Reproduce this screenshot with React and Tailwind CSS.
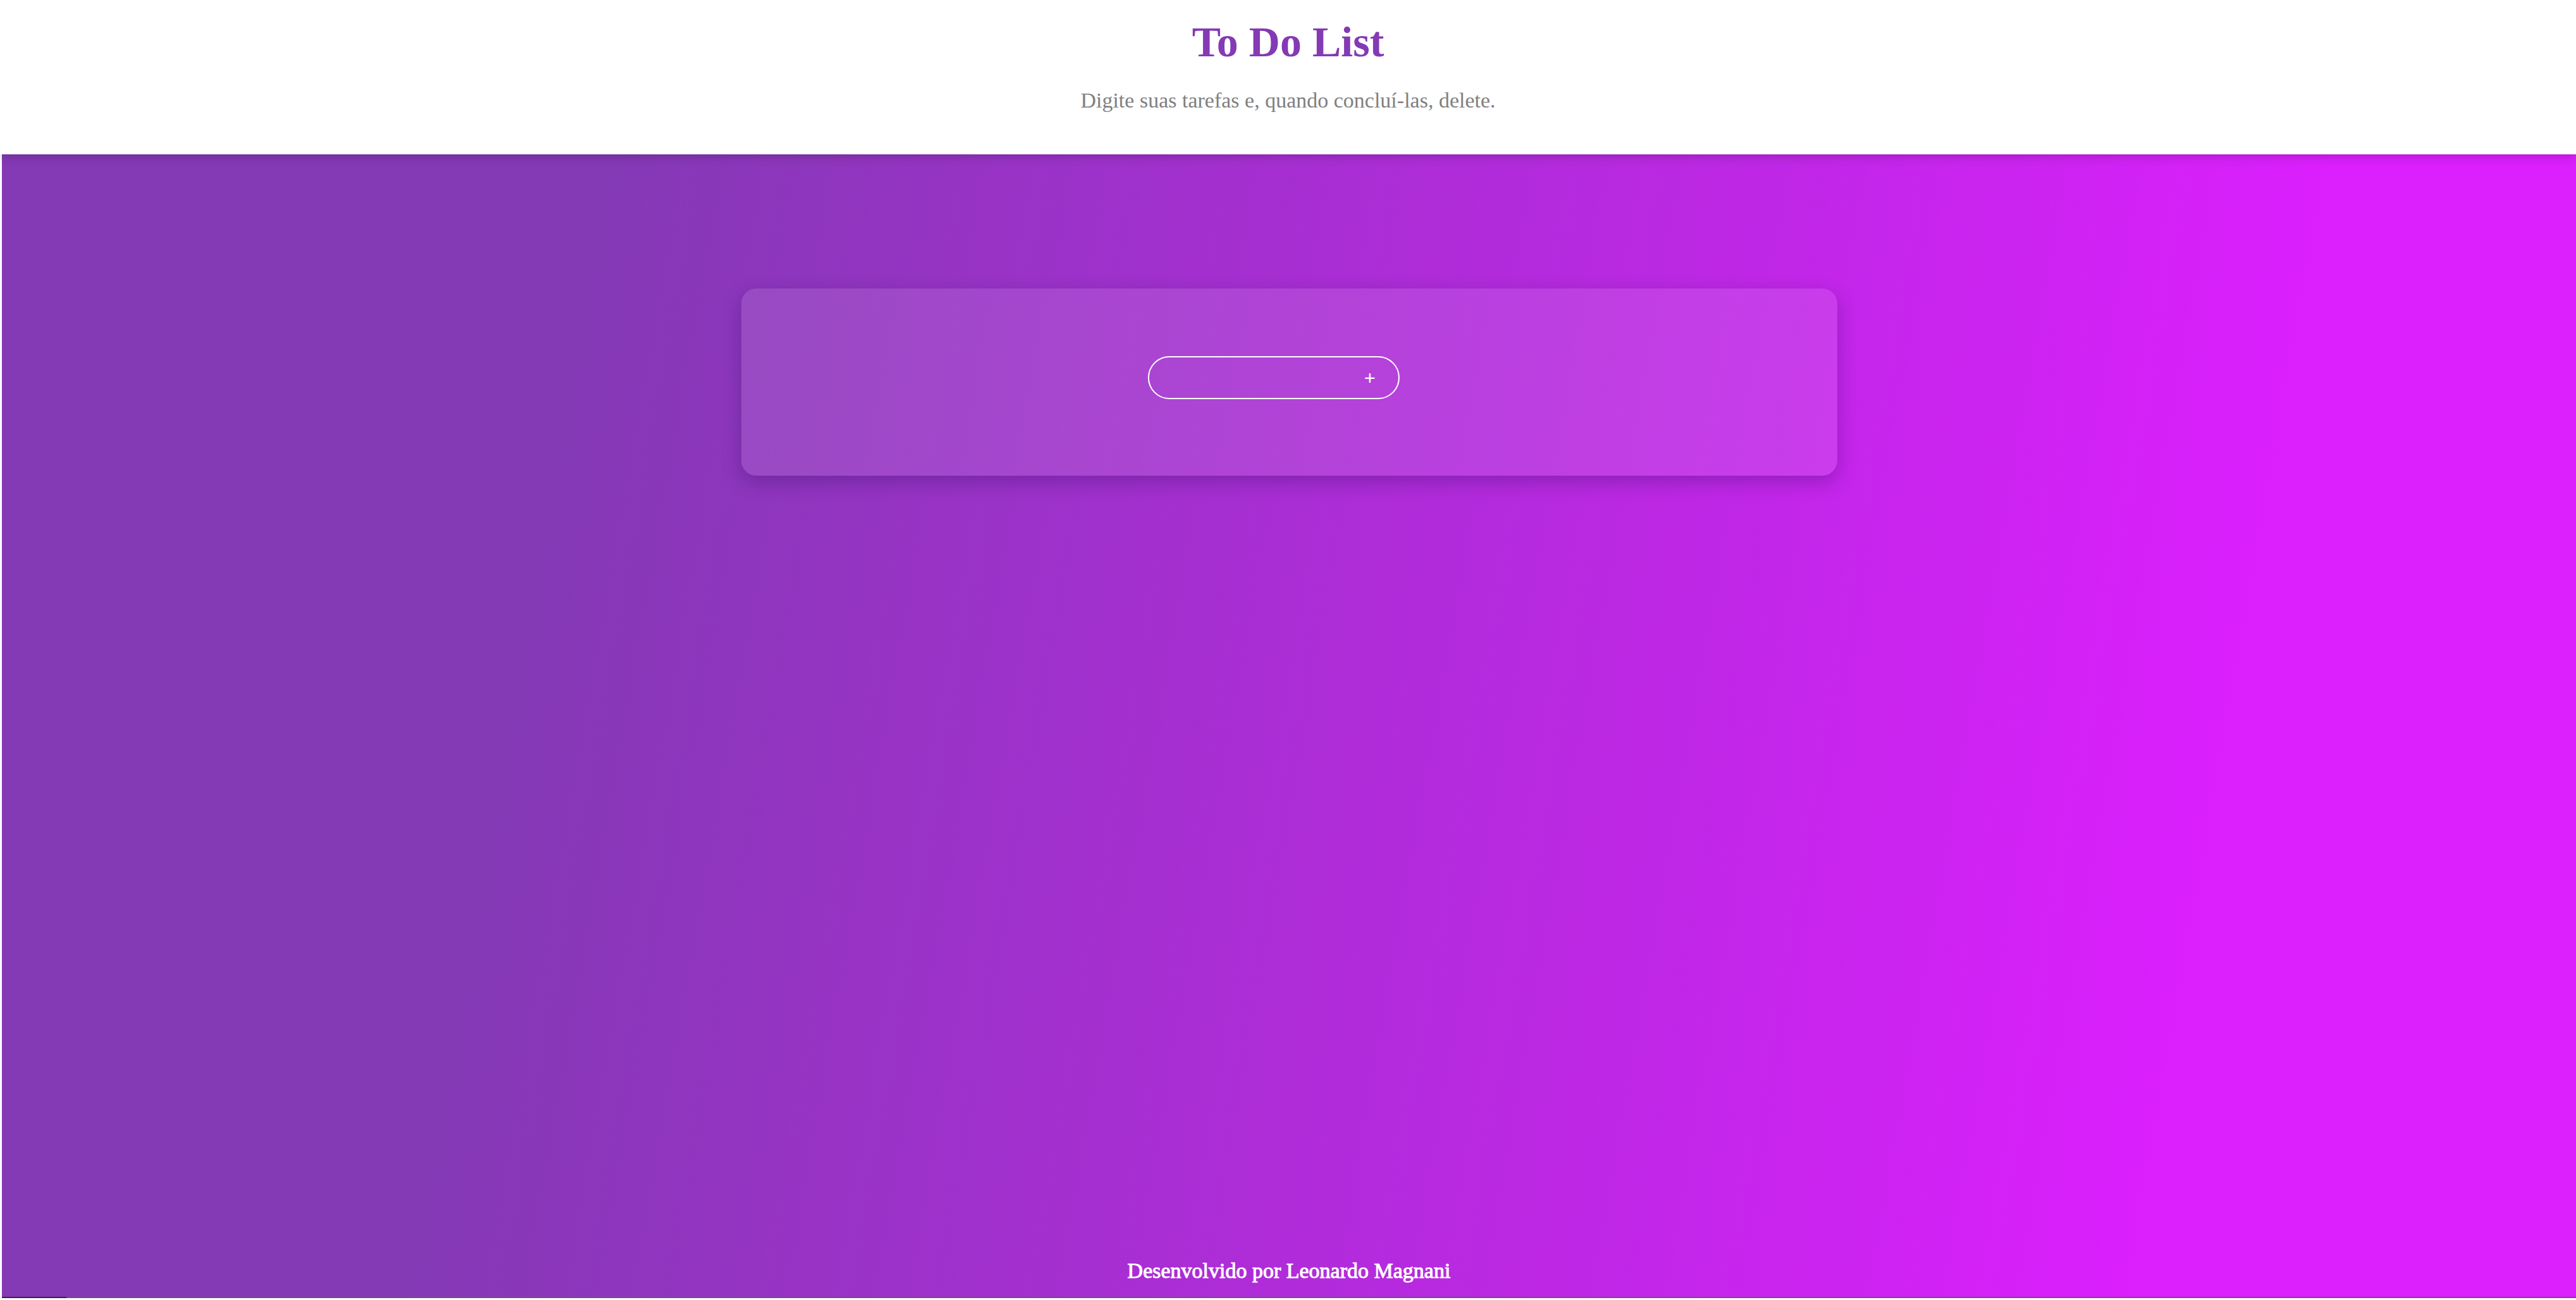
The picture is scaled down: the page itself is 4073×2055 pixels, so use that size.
export default function App() {
  return (
    <div className="flex h-screen flex-col overflow-hidden bg-white font-['Liberation_Serif',serif]">
      <header className="relative z-10 flex h-[244px] shrink-0 flex-col items-center bg-white shadow-[0_4px_14px_rgba(0,0,0,0.18)]">
        <h1 className="mt-[32px] text-[68px] font-bold leading-none text-[#8439b5]">
          To Do List
        </h1>
        <p className="mt-[42px] text-[34px] leading-none text-[#808080]">
          Digite suas tarefas e, quando concluí-las, delete.
        </p>
      </header>

      <main className="ml-[3px] flex h-[1806px] shrink-0 flex-col items-center bg-[linear-gradient(100deg,#8439b5_22%,#db1ffd_84%)]">
        <section className="mt-[212px] flex w-[1733px] justify-center rounded-[24px] bg-white/10 pt-[107px] pb-[121px] shadow-[0_10px_30px_rgba(40,10,90,0.3)]">
          <div className="mr-[48px] flex h-[68px] w-[398px] items-center rounded-full border-2 border-white">
            <input
              type="text"
              className="h-full min-w-0 flex-1 bg-transparent pl-[30px] text-[30px] text-white outline-none"
            />
            <button
              type="button"
              className="pr-[36px] text-[32px] font-bold leading-none text-white"
            >
              +
            </button>
          </div>
        </section>

        <footer className="mt-auto pb-[24px] text-[34px] leading-none text-white [-webkit-text-stroke:1px_#fff]">
          Desenvolvido por Leonardo Magnani
        </footer>
      </main>

      <div className="flex h-[2px] shrink-0">
        <div className="ml-[3px] w-[102px] bg-[#2e2e2e]" />
        <div className="flex-1 bg-[#5f5f5f]" />
      </div>
    </div>
  );
}
